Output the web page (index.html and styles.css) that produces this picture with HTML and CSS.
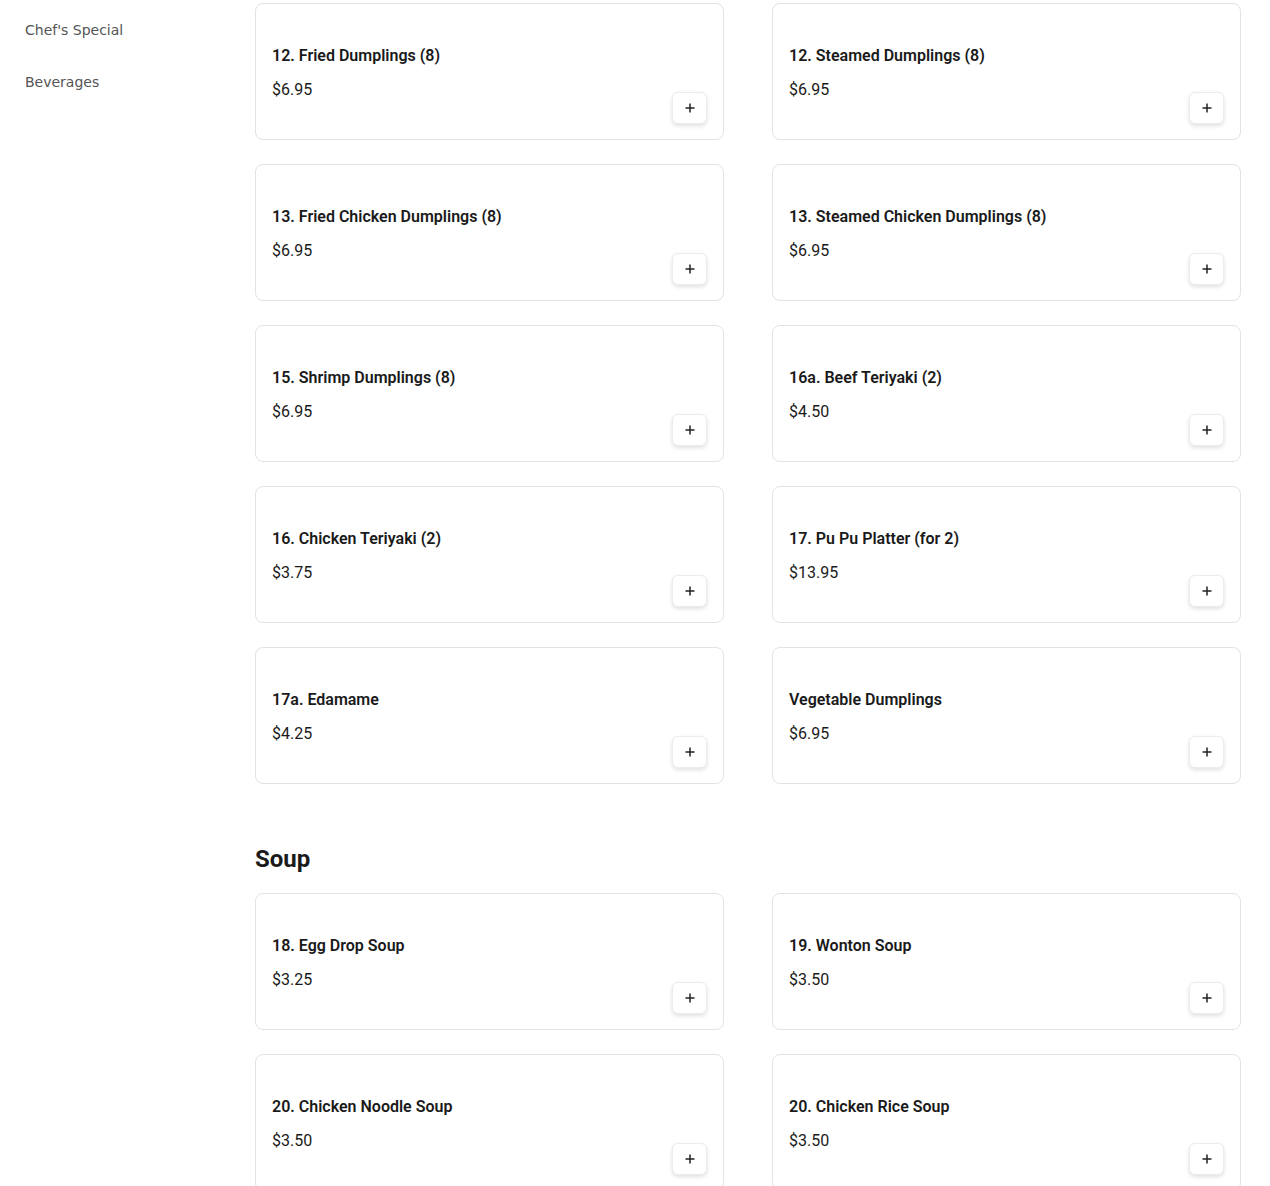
FILE: index.html
```html
<!DOCTYPE html>
<html lang="en">
<head>
<meta charset="utf-8">
<title>Menu</title>
<link rel="stylesheet" href="styles.css">
</head>
<body>
<div class="page">
  <nav class="sidebar">
    <a class="nav-link" href="#">Chef's Special</a>
    <a class="nav-link" href="#">Beverages</a>
  </nav>
  <main class="menu">
    <section class="section first">
      <div class="grid">
        <div class="card"><div class="title">12. Fried Dumplings (8)</div><div class="bottom"><span class="price">$6.95</span><button class="add"><svg viewBox="0 0 12 12" width="12" height="12"><path d="M6 1.5v9M1.5 6h9" stroke="#222" stroke-width="1.5" fill="none"/></svg></button></div></div>
        <div class="card"><div class="title">12. Steamed Dumplings (8)</div><div class="bottom"><span class="price">$6.95</span><button class="add"><svg viewBox="0 0 12 12" width="12" height="12"><path d="M6 1.5v9M1.5 6h9" stroke="#222" stroke-width="1.5" fill="none"/></svg></button></div></div>
        <div class="card"><div class="title">13. Fried Chicken Dumplings (8)</div><div class="bottom"><span class="price">$6.95</span><button class="add"><svg viewBox="0 0 12 12" width="12" height="12"><path d="M6 1.5v9M1.5 6h9" stroke="#222" stroke-width="1.5" fill="none"/></svg></button></div></div>
        <div class="card"><div class="title">13. Steamed Chicken Dumplings (8)</div><div class="bottom"><span class="price">$6.95</span><button class="add"><svg viewBox="0 0 12 12" width="12" height="12"><path d="M6 1.5v9M1.5 6h9" stroke="#222" stroke-width="1.5" fill="none"/></svg></button></div></div>
        <div class="card"><div class="title">15. Shrimp Dumplings (8)</div><div class="bottom"><span class="price">$6.95</span><button class="add"><svg viewBox="0 0 12 12" width="12" height="12"><path d="M6 1.5v9M1.5 6h9" stroke="#222" stroke-width="1.5" fill="none"/></svg></button></div></div>
        <div class="card"><div class="title">16a. Beef Teriyaki (2)</div><div class="bottom"><span class="price">$4.50</span><button class="add"><svg viewBox="0 0 12 12" width="12" height="12"><path d="M6 1.5v9M1.5 6h9" stroke="#222" stroke-width="1.5" fill="none"/></svg></button></div></div>
        <div class="card"><div class="title">16. Chicken Teriyaki (2)</div><div class="bottom"><span class="price">$3.75</span><button class="add"><svg viewBox="0 0 12 12" width="12" height="12"><path d="M6 1.5v9M1.5 6h9" stroke="#222" stroke-width="1.5" fill="none"/></svg></button></div></div>
        <div class="card"><div class="title">17. Pu Pu Platter (for 2)</div><div class="bottom"><span class="price">$13.95</span><button class="add"><svg viewBox="0 0 12 12" width="12" height="12"><path d="M6 1.5v9M1.5 6h9" stroke="#222" stroke-width="1.5" fill="none"/></svg></button></div></div>
        <div class="card"><div class="title">17a. Edamame</div><div class="bottom"><span class="price">$4.25</span><button class="add"><svg viewBox="0 0 12 12" width="12" height="12"><path d="M6 1.5v9M1.5 6h9" stroke="#222" stroke-width="1.5" fill="none"/></svg></button></div></div>
        <div class="card"><div class="title">Vegetable Dumplings</div><div class="bottom"><span class="price">$6.95</span><button class="add"><svg viewBox="0 0 12 12" width="12" height="12"><path d="M6 1.5v9M1.5 6h9" stroke="#222" stroke-width="1.5" fill="none"/></svg></button></div></div>
      </div>
    </section>
    <section class="section">
      <h2 class="section-title">Soup</h2>
      <div class="grid">
        <div class="card"><div class="title">18. Egg Drop Soup</div><div class="bottom"><span class="price">$3.25</span><button class="add"><svg viewBox="0 0 12 12" width="12" height="12"><path d="M6 1.5v9M1.5 6h9" stroke="#222" stroke-width="1.5" fill="none"/></svg></button></div></div>
        <div class="card"><div class="title">19. Wonton Soup</div><div class="bottom"><span class="price">$3.50</span><button class="add"><svg viewBox="0 0 12 12" width="12" height="12"><path d="M6 1.5v9M1.5 6h9" stroke="#222" stroke-width="1.5" fill="none"/></svg></button></div></div>
        <div class="card"><div class="title">20. Chicken Noodle Soup</div><div class="bottom"><span class="price">$3.50</span><button class="add"><svg viewBox="0 0 12 12" width="12" height="12"><path d="M6 1.5v9M1.5 6h9" stroke="#222" stroke-width="1.5" fill="none"/></svg></button></div></div>
        <div class="card"><div class="title">20. Chicken Rice Soup</div><div class="bottom"><span class="price">$3.50</span><button class="add"><svg viewBox="0 0 12 12" width="12" height="12"><path d="M6 1.5v9M1.5 6h9" stroke="#222" stroke-width="1.5" fill="none"/></svg></button></div></div>
      </div>
    </section>
  </main>
</div>
</body>
</html>
```
FILE: styles.css
```css
* { box-sizing: border-box; }
html, body { margin: 0; padding: 0; background: #fff; }
body { font-family: Roboto, "Liberation Sans", sans-serif; color: #1a1a1a; }
.page { display: flex; align-items: flex-start; }
.sidebar {
  width: 255px;
  flex: 0 0 255px;
  padding: 20px 0 0 25px;
  display: flex;
  flex-direction: column;
  gap: 32px;
}
.nav-link {
  font-family: "DejaVu Sans", sans-serif;
  font-size: 14px;
  line-height: 20px;
  color: #555;
  text-decoration: none;
}
.menu { flex: 1; padding: 3px 29px 0 0; }
.section { margin-top: 59px; }
.section.first { margin-top: 0; }
.section-title {
  margin: 0 0 18px 0;
  font-family: Roboto, sans-serif;
  font-size: 24px;
  line-height: 32px;
  font-weight: 700;
  color: #1a1a1a;
}
.grid {
  display: grid;
  grid-template-columns: 1fr 1fr;
  column-gap: 48px;
  row-gap: 24px;
}
.card {
  border: 1px solid #e3e3e3;
  border-radius: 8px;
  padding: 40px 16px 15px 16px;
  display: flex;
  flex-direction: column;
  background: #fff;
}
.title {
  font-size: 16px;
  line-height: 24px;
  font-weight: 600;
  color: #1a1a1a;
}
.bottom {
  margin-top: 10px;
  display: flex;
  justify-content: space-between;
  align-items: flex-start;
}
.price {
  font-size: 16px;
  line-height: 24px;
  color: #1a1a1a;
}
.add {
  margin-top: 14px;
  width: 35px;
  height: 32px;
  padding: 0;
  border: 1px solid #ececec;
  border-radius: 6px;
  background: #fff;
  box-shadow: 0 2px 4px rgba(0,0,0,0.12);
  display: flex;
  align-items: center;
  justify-content: center;
}
.add svg { display: block; }
```
